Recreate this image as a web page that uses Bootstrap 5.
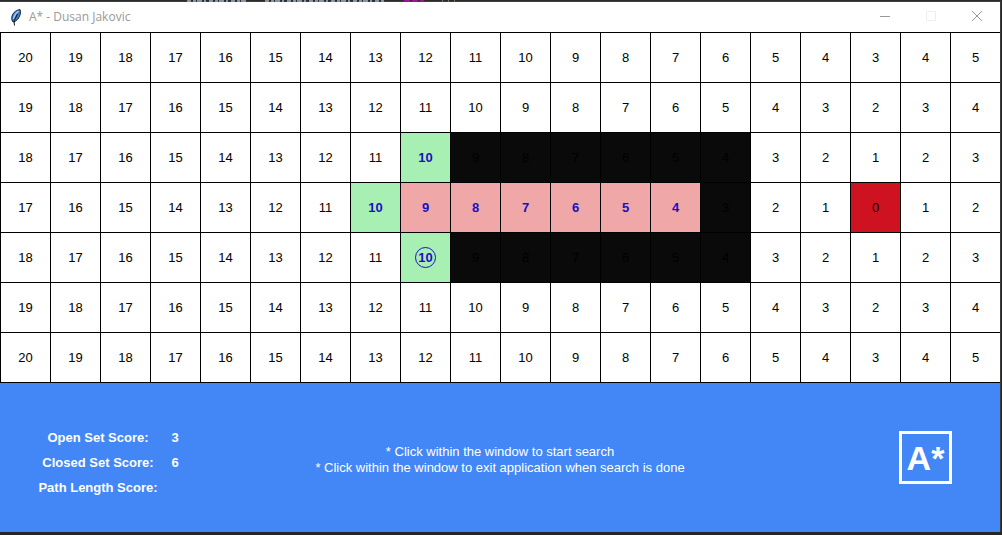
<!DOCTYPE html>
<html lang="en">
<head>
<meta charset="utf-8">
<meta name="viewport" content="width=device-width, initial-scale=1">
<title>A* - Dusan Jakovic</title>
<link href="https://cdn.jsdelivr.net/npm/bootstrap@5.3.0/dist/css/bootstrap.min.css" rel="stylesheet">
<style>
  body { background: #262626; font-family: "Liberation Sans", Arial, sans-serif; font-size: 13px; line-height: 16px; }
  .desk-top { height: 2px; background: #2b2b2b; }
  .desk-top svg { display: block; }
  .app-window { background: #fff; margin-right: 2px; box-shadow: 0 0 0 1px #3c3c3c; }
  .title-bar { height: 30px; padding-left: 9px; font-family: "Open Sans", sans-serif; font-size: 12px; color: #999; }
  .win-btn { width: 46px; height: 28px; color: #999; }
  .win-btn:disabled { color: #e8e8e8; }
  .board { table-layout: fixed; border-collapse: separate; border-spacing: 0; border-bottom: 1px solid #000; color: #000; }
  .board td { height: 50px; padding: 0; border: 0 solid #000; border-width: 1px 0 0 1px; text-align: center; vertical-align: middle; }
  .board .open, .board .closed { color: #1a10c0; font-weight: bold; }
  .board .open { background: #a7efb3; }
  .board .closed { background: #f0a7a8; }
  .board .wall { background: #0a0a0a; }
  .board .goal { background: #cf1220; }
  .current { width: 21px; height: 21px; border: 1px solid #1a10c0; border-radius: 50%; }
  .info-panel { background: #4287f5; color: #fff; min-height: 149px; }
  .scores { margin: 10px 0 0 36px; font-weight: bold; text-align: center; }
  .scores th, .scores td { height: 25px; padding: 0; }
  .scores th { width: 124px; }
  .scores td { width: 30px; }
  .logo-box { width: 53px; height: 53px; margin-right: 48px; border: 3px solid #fff; font-size: 34px; line-height: 40px; font-weight: bold; }
</style>
</head>
<body>
<div class="desk-top overflow-hidden">
  <svg width="480" height="2" aria-hidden="true">
    <path d="M187 1H248M265 1H385" stroke="#8795a3" stroke-width="2" stroke-dasharray="4 2 3 1 5 2 2 3"/>
    <path d="M404 1H424" stroke="#a0109a" stroke-width="2" stroke-dasharray="6 2"/>
    <path d="M442 1H455" stroke="#7a7468" stroke-width="2" stroke-dasharray="1 5"/>
  </svg>
</div>
<main class="app-window">
  <header class="title-bar d-flex align-items-center">
    <svg class="me-1" width="16" height="18" viewBox="0 0 16 18" aria-hidden="true">
      <path d="M3.500 13.500C1.500 9 3.500 3 11 1.500C12.500 6 10 11.500 5 14Z" fill="#3f7fc8" stroke="#152238"/>
      <path d="M4.500 11Q5.500 6 9.500 3" stroke="#a9cff5" stroke-width="1.500" fill="none"/>
      <path d="M5.500 17.500L5 13L8.500 6" stroke="#111" fill="none"/>
    </svg>
    <span class="flex-grow-1">A* - Dusan Jakovic</span>
    <button type="button" class="win-btn align-self-start btn btn-link p-0 border-0 rounded-0 d-flex align-items-center justify-content-center" aria-label="Minimize"><svg width="12" height="12"><path d="M1 6.500H11" stroke="currentColor"/></svg></button>
    <button type="button" disabled class="win-btn align-self-start btn btn-link p-0 border-0 rounded-0 d-flex align-items-center justify-content-center" aria-label="Maximize"><svg width="12" height="12"><path d="M1.500 1.500H10.500V10.500H1.500Z" fill="none" stroke="currentColor"/></svg></button>
    <button type="button" class="win-btn align-self-start btn btn-link p-0 border-0 rounded-0 d-flex align-items-center justify-content-center" aria-label="Close"><svg width="12" height="12"><path d="M1 1L11 11M11 1L1 11" stroke="currentColor"/></svg></button>
  </header>
  <table class="board w-100" aria-label="Search grid"><tbody id="board"></tbody></table>
  <section class="info-panel row g-0 align-items-center">
    <div class="col-3">
      <table class="scores">
        <tr><th scope="row">Open Set Score:</th><td>3</td></tr>
        <tr><th scope="row">Closed Set Score:</th><td>6</td></tr>
        <tr><th scope="row">Path Length Score:</th><td></td></tr>
      </table>
    </div>
    <div class="col-6 text-center pt-1">* Click within the window to start search<br>* Click within the window to exit application when search is done</div>
    <div class="col-3 d-flex justify-content-end"><div class="logo-box d-flex align-items-center justify-content-center">A*</div></div>
  </section>
</main>
<script src="https://cdn.jsdelivr.net/npm/bootstrap@5.3.0/dist/js/bootstrap.bundle.min.js"></script>
<script>
  // w wall, o open set, * current node, c closed set, g goal
  const rows = [
    '....................',
    '....................',
    '........owwwwww.....',
    '.......occccccw..g..',
    '........*wwwwww.....',
    '....................',
    '....................'
  ];
  const kinds = { w: 'wall', o: 'open', '*': 'open', c: 'closed', g: 'goal' };
  const goal = { x: 17, y: 3 };
  const board = document.getElementById('board');
  rows.forEach((line, y) => {
    const tr = board.insertRow();
    [...line].forEach((mark, x) => {
      const td = tr.insertCell();
      if (kinds[mark]) td.className = kinds[mark];
      // Manhattan distance to the goal
      const distance = Math.abs(goal.x - x) + Math.abs(goal.y - y);
      if (mark === '*') {
        const ring = document.createElement('div');
        ring.className = 'current mx-auto d-flex align-items-center justify-content-center';
        ring.textContent = distance;
        td.append(ring);
      } else td.textContent = distance;
    });
  });
</script>
</body>
</html>
